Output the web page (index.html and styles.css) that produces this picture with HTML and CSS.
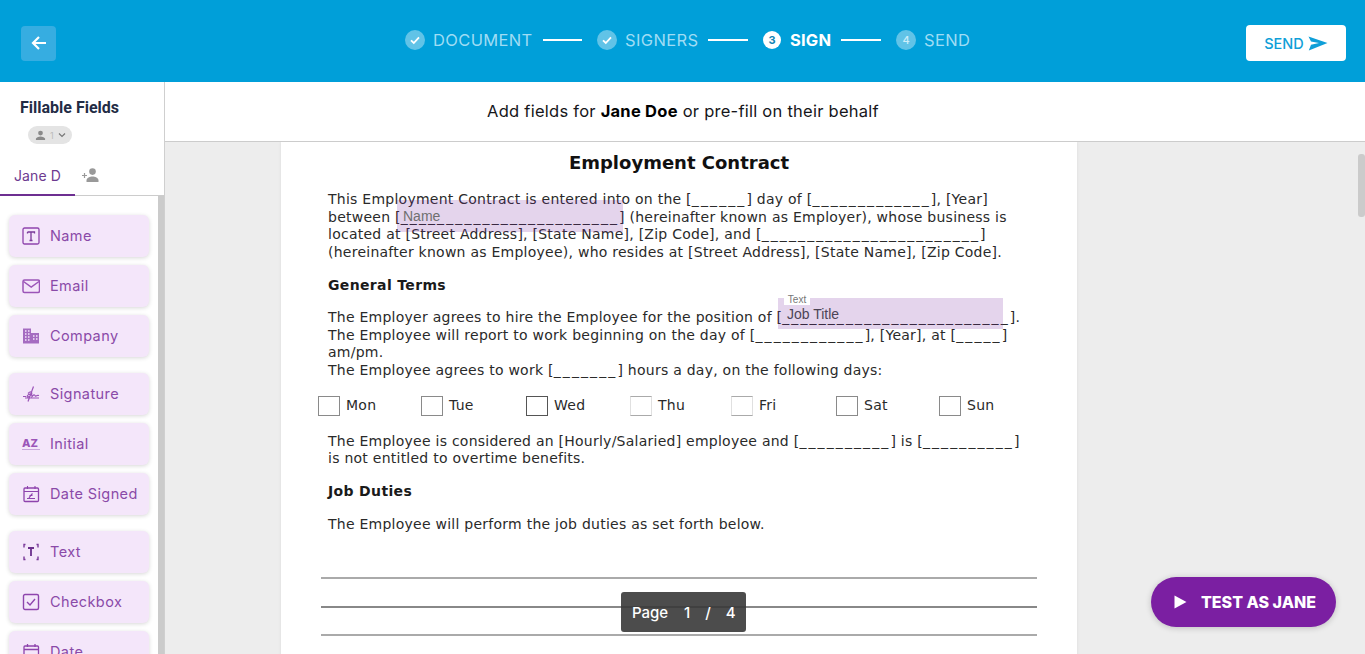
FILE: index.html
```html
<!DOCTYPE html>
<html lang="en">
<head>
<meta charset="utf-8">
<title>Sign</title>
<link rel="stylesheet" href="styles.css">
</head>
<body>
<header class="topbar">
  <button class="back" aria-label="Back"><svg width="18" height="18" viewBox="0 0 18 18"><path d="M16 9H3.500M9 3 3 9l6 6" fill="none" stroke="#fff" stroke-width="2.200"/></svg></button>
  <nav class="steps">
    <span class="dot"><svg width="12" height="12" viewBox="0 0 12 12"><path d="M2 6.300 4.800 9 10 3.400" fill="none" stroke="#fff" stroke-width="1.800"/></svg></span>
    <span class="step w-doc">DOCUMENT</span><i class="rule r1"></i>
    <span class="dot"><svg width="12" height="12" viewBox="0 0 12 12"><path d="M2 6.300 4.800 9 10 3.400" fill="none" stroke="#fff" stroke-width="1.800"/></svg></span>
    <span class="step w-sig">SIGNERS</span><i class="rule r2"></i>
    <span class="dot active">3</span>
    <span class="step on w-sign">SIGN</span><i class="rule r3"></i>
    <span class="dot">4</span>
    <span class="step w-send">SEND</span>
  </nav>
  <button class="send">SEND<svg width="20" height="15" viewBox="0 0 20 15"><path d="M0.500 0.500 19.500 7 0.800 14.500 3 8.700 11 7 3 5.600Z" fill="#0f9fd8"/></svg></button>
</header>
<div class="body">
  <aside class="side">
    <div class="side-head">
      <h2>Fillable Fields</h2>
      <div class="chip"><svg width="11" height="11" viewBox="0 0 12 12"><circle cx="6" cy="3.400" r="2.600" fill="#8a8a8a"/><path d="M1 11V9.600C1 8 4 7 6 7s5 1 5 2.600V11Z" fill="#8a8a8a"/></svg><span>1</span><svg width="8" height="6" viewBox="0 0 8 6"><path d="M1 1.500 4 4.500 7 1.500" fill="none" stroke="#777" stroke-width="1.200"/></svg></div>
    </div>
    <div class="tabs">
      <span class="tab">Jane D</span>
      <svg class="addp" width="17" height="14" viewBox="0 0 17 14"><path d="M0 7.500h5M2.500 5v5" stroke="#999" stroke-width="1.200"/><circle cx="10.500" cy="3.600" r="3.300" fill="#999"/><path d="M4.500 14v-1.600C4.500 10 8 8.500 10.500 8.500S16.500 10 16.500 12.400V14Z" fill="#999"/></svg>
    </div>
    <div class="list">
      <div class="group">
        <div class="item"><svg class="ic" viewBox="0 0 18 18"><rect x="1" y="1" width="16" height="16" rx="1.500" fill="none" stroke="#8e44ad" stroke-width="1.300"/><path d="M5.500 5h7v1.500M9 5v8.500M7.500 13.500h3M5.500 5v1.500" fill="none" stroke="#7a3a9a" stroke-width="1.300"/></svg><span>Name</span></div>
        <div class="item"><svg class="ic" viewBox="0 0 18 18"><rect x="1" y="3" width="16.500" height="12.500" rx="1.500" fill="none" stroke="#9b55b8" stroke-width="1.500"/><path d="M1.500 4.500 9.200 10 17 4.500" fill="none" stroke="#9b55b8" stroke-width="1.500"/></svg><span>Email</span></div>
        <div class="item"><svg class="ic" viewBox="0 0 18 18"><path d="M1 1.500h8v15H1zM9 6h8v10.500H9z" fill="#a56cc1"/><path d="M3 4h1.500M6 4h1.500M3 7h1.500M6 7h1.500M3 10h1.500M6 10h1.500M3 13h1.500M6 13h1.500M11 9h1.500M14 9h1.500M11 12h1.500M14 12h1.500" stroke="#f4e6fa" stroke-width="1.300"/></svg><span>Company</span></div>
      </div>
      <div class="group">
        <div class="item"><svg class="ic" viewBox="0 0 18 18"><path d="M1 11.500h3M11.500 1.500 6 16.500M6 8.500c3-3 5-1 3 1.500s-5 2.500-3.500.5 5-2 4.500 1c1-1 1.500-2 2.500-1.500s.5 1.500 1.500 1 1-1 3-.5M3 13h14" fill="none" stroke="#9b55b8" stroke-width="1.200"/></svg><span>Signature</span></div>
        <div class="item"><span class="az">AZ</span><span>Initial</span></div>
        <div class="item"><svg class="ic" viewBox="0 0 18 18"><rect x="2" y="3" width="14.500" height="13.500" rx="1" fill="none" stroke="#8e44ad" stroke-width="1.300"/><path d="M2 6.500h14.500M5.500 1v3M13 1v3M5 13.500h8M7 13c1-2 2-3 3.500-4.500M7.500 10.500h3" fill="none" stroke="#8e44ad" stroke-width="1.100"/></svg><span>Date Signed</span></div>
      </div>
      <div class="group">
        <div class="item"><svg class="ic" viewBox="0 0 18 18"><path d="M3.500 1.500H2v3M14.500 1.500H16v3M3.500 16.500H2v-3M14.500 16.500H16v-3" fill="none" stroke="#7a3a9a" stroke-width="1.400"/><path d="M6 5h6M9 5v8" fill="none" stroke="#6b2f8c" stroke-width="1.800"/></svg><span>Text</span></div>
        <div class="item"><svg class="ic" viewBox="0 0 18 18"><rect x="1.500" y="1.500" width="15" height="15" rx="1.500" fill="none" stroke="#8e44ad" stroke-width="1.400"/><path d="M5 9l3 3 5-6" fill="none" stroke="#8e44ad" stroke-width="1.400"/></svg><span>Checkbox</span></div>
        <div class="item"><svg class="ic" viewBox="0 0 18 18"><rect x="2" y="3" width="14.500" height="13.500" rx="1" fill="none" stroke="#8e44ad" stroke-width="1.300"/><path d="M2 6.500h14.500M5.500 1v3M13 1v3M5 12h1.500M8.500 12H10M12 12h1.500" fill="none" stroke="#8e44ad" stroke-width="1.300"/></svg><span>Date</span></div>
      </div>
    </div>
    <div class="side-thumb"></div>
  </aside>
  <main class="main">
    <div class="hint"><span>Add fields for <b>Jane Doe</b> or pre-fill on their behalf</span></div>
    <div class="canvas">
      <article class="page">
        <h1>Employment Contract</h1>
        <p class="p1">This Employment Contract is entered into on the [<span class="u">______</span>] day of [<span class="u">_____________</span>], [Year]<br>between [<span class="u">________________________</span>] (hereinafter known as Employer), whose business is<br>located at [Street Address], [State Name], [Zip Code], and [<span class="u">________________________</span>]<br>(hereinafter known as Employee), who resides at [Street Address], [State Name], [Zip Code].</p>
        <h3 class="h-terms">General Terms</h3>
        <p class="p2">The Employer agrees to hire the Employee for the position of [<span class="u">_________________________</span>].<br>The Employee will report to work beginning on the day of [<span class="u">____________</span>], [Year], at [<span class="u">_____</span>]<br>am/pm.<br>The Employee agrees to work [<span class="u">_______</span>] hours a day, on the following days:</p>
        <div class="days">
          <label class="day"><i class="box"></i>Mon</label>
          <label class="day"><i class="box"></i>Tue</label>
          <label class="day"><i class="box dark"></i>Wed</label>
          <label class="day"><i class="box light"></i>Thu</label>
          <label class="day"><i class="box light"></i>Fri</label>
          <label class="day"><i class="box"></i>Sat</label>
          <label class="day"><i class="box"></i>Sun</label>
        </div>
        <p class="p3">The Employee is considered an [Hourly/Salaried] employee and [<span class="u">__________</span>] is [<span class="u">__________</span>]<br>is not entitled to overtime benefits.</p>
        <h3 class="h-duties">Job Duties</h3>
        <p class="p4">The Employee will perform the job duties as set forth below.</p>
        <div class="rules"><hr><hr><hr></div>
        <div class="field f-name">Name</div>
        <div class="field f-job"><span class="tag">Text</span>Job Title</div>
      </article>
    </div>
    <div class="pager"><span>Page</span><span class="num">1</span><span class="num">/</span><span class="num">4</span></div>
    <button class="test"><svg width="13" height="14" viewBox="0 0 13 14"><path d="M0.500 0.500 12.500 7 0.500 13.500Z" fill="#fff"/></svg>TEST AS JANE</button>
    <div class="main-thumb"></div>
  </main>
</div>
</body>
</html>
```
FILE: styles.css
```css
* { box-sizing: border-box; }
html, body { margin: 0; height: 654px; overflow: hidden; background: #fff; }
body { font-family: "Inter", "Noto Sans", sans-serif; }
button { border: 0; font: inherit; cursor: pointer; }

.topbar { height: 82px; background: #009fd9; display: flex; align-items: center; position: relative; padding: 4px 19px 0 21px; }
.back { width: 35px; height: 35px; border-radius: 4px; background: #36ade1; display: flex; align-items: center; justify-content: center; padding: 0; }
.steps { display: flex; align-items: center; margin-left: 349px; margin-top: -6px; }
.dot { width: 20px; height: 20px; border-radius: 50%; background: rgba(255,255,255,.38); color: #cdeefa; font-size: 11px; display: flex; align-items: center; justify-content: center; font-weight: 500; }
.dot.active { width: 18px; height: 18px; background: #fff; color: #1186b5; font-weight: 700; margin-right: 1px; }
.step { color: #9fdcf4; font-size: 16.500px; margin-left: 8px; white-space: nowrap; letter-spacing: .35px; }
.step.on { color: #fff; font-weight: 700; letter-spacing: .2px; }
.w-doc { width: 99px; } .w-sig { width: 73px; } .w-sign { width: 42px; } .w-send { width: 46px; }
.rule { height: 2px; background: #fff; width: 39px; }
.r1 { margin: 0 15px 0 11px; } .r2 { margin: 0 15px 0 10px; width: 40px; } .r3 { margin: 0 15px 0 9px; width: 40px; }
.send { margin-left: auto; width: 100px; height: 36px; background: #fff; border-radius: 4px; color: #0f9fd8; font-size: 14.500px; font-weight: 500; display: flex; align-items: center; justify-content: center; gap: 4px; padding: 0; }

.body { display: flex; height: 572px; }
.side { width: 165px; flex: none; border-right: 1px solid #cfcfcf; position: relative; overflow: hidden; background: #fff; }
.side-head { height: 68px; padding: 16px 0 0 20px; }
.side-head h2 { margin: 0; font: 700 16px/20px "Roboto", sans-serif; color: #232c45; }
.chip { margin: 8px 0 0 8px; width: 44px; height: 18px; border-radius: 9px; background: #e4e4e4; display: flex; align-items: center; gap: 4px; padding-left: 7px; font-size: 9px; color: #bbb; }
.tabs { height: 46px; border-bottom: 1px solid #ccc; position: relative; display: flex; align-items: center; padding: 5px 0 0 14px; }
.tab { font-size: 14px; letter-spacing: .1px; color: #6d3a90; width: 68px; }
.tabs::after { content: ""; position: absolute; left: 0; bottom: -1px; width: 75px; height: 2px; background: #6d2f91; }
.list { padding: 19px 0 0 9px; display: flex; flex-direction: column; gap: 16px; }
.group { display: flex; flex-direction: column; gap: 8px; }
.item { width: 140px; height: 42px; border-radius: 6px; background: #f4e6fa; box-shadow: 0 1px 4px rgba(0,0,0,.16); display: flex; align-items: center; padding-left: 13px; gap: 10px; color: #8a4aa8; font-size: 14.500px; letter-spacing: .4px; white-space: nowrap; }
.item span:last-child { position: relative; top: -1px; }
.ic { width: 18px; height: 18px; flex: none; }
.az { width: 18px; font-size: 11px; font-weight: 800; letter-spacing: 0; color: #9b55b8; border-bottom: 1px solid #c9a6dc; line-height: 11px; flex: none; }
.side-thumb { position: absolute; right: 0; top: 114px; width: 6px; height: 470px; background: #cbcbcb; }

.main { flex: 1; position: relative; min-width: 0; overflow: hidden; }
.hint { height: 60px; border-bottom: 1px solid #ccc; background: #fff; text-align: center; padding: 0 164px 0 0; font-size: 16.500px; letter-spacing: .25px; line-height: 59px; color: #16161a; white-space: nowrap; }
.hint b { font-weight: 700; color: #000; }
.canvas { height: 512px; background: #ededed; padding-left: 116px; overflow: hidden; }
.page { width: 796px; height: 700px; background: #fff; position: relative; box-shadow: 0 0 3px rgba(0,0,0,.08); padding: 10px 0 0 47px; font: 14px/17.500px "DejaVu Sans", Verdana, sans-serif; letter-spacing: .25px; color: #2a2a2a; white-space: nowrap; }
.u { letter-spacing: 2.100px; }
.page h1 { margin: 0 0 0 -47px; text-align: center; font: 700 18px/22px "DejaVu Sans", sans-serif; letter-spacing: 0; color: #111; }
.page h3 { margin: 0; font: 700 14px/18px "DejaVu Sans", sans-serif; letter-spacing: .35px; color: #1a1a1a; }
.page p { margin: 0; }
.p1 { padding-top: 17px; }
.h-terms { padding-top: 15px; }
.p2 { padding-top: 15.400px; }
.days { display: flex; margin: 16.600px 0 0 -10px; height: 20px; align-items: center; }
.day { display: flex; align-items: center; gap: 6px; width: 104px; }
.day:nth-child(1) { width: 103px; } .day:nth-child(2) { width: 105px; } .day:nth-child(4) { width: 101px; } .day:nth-child(5) { width: 105px; } .day:nth-child(6) { width: 103px; }
.box { width: 22px; height: 20px; border: 1px solid #8a8a8a; flex: none; }
.box.dark { border-color: #555; }
.box.light { border-color: #e0e0e0; border-top-color: #aaa; border-bottom-color: #aaa; }
.p3 { padding-top: 16.700px; }
.h-duties { padding-top: 14.300px; }
.p4 { padding-top: 16px; }
.rules { margin: 44px 0 0 -7px; width: 716px; display: flex; flex-direction: column; gap: 26.500px; }
.rules hr { margin: 0; border: 0; height: 2px; background: #aaa; }
.rules hr:nth-child(2) { background: #888; }
.field { position: absolute; background: rgba(118,40,160,.2); font-family: "Liberation Sans", Arial, sans-serif; font-size: 14px; letter-spacing: 0; }
.f-name { left: 116px; top: 58px; width: 226px; height: 32px; padding: 8px 0 0 6px; line-height: 16px; color: #6f6f6f; }
.f-job { left: 497px; top: 156px; width: 225px; height: 31px; padding: 8px 0 0 9px; line-height: 16px; color: #4c4455; }
.tag { position: absolute; left: 6px; top: -3px; height: 10px; width: 26px; background: #fff; color: #777; font-size: 10px; line-height: 10px; text-align: center; }
.pager { position: absolute; left: 456px; top: 510px; width: 125px; height: 40px; background: rgba(56,56,56,.9); border-radius: 3px; color: #fff; font-size: 15px; font-weight: 500; display: flex; align-items: center; padding-left: 11px; white-space: nowrap; }
.num { margin-left: 15px; }
.pager span:first-child { width: 37px; }
.test { position: absolute; left: 986px; top: 495px; width: 185px; height: 50px; border-radius: 25px; background: #7b1fa2; color: #fff; font-size: 16px; font-weight: 800; display: flex; align-items: center; gap: 14px; padding: 0 0 0 23px; box-shadow: 0 1px 6px rgba(0,0,0,.2); white-space: nowrap; }
.main-thumb { position: absolute; right: 0; top: 72px; width: 7px; height: 63px; border-radius: 3px; background: #cbcbcb; }
```
